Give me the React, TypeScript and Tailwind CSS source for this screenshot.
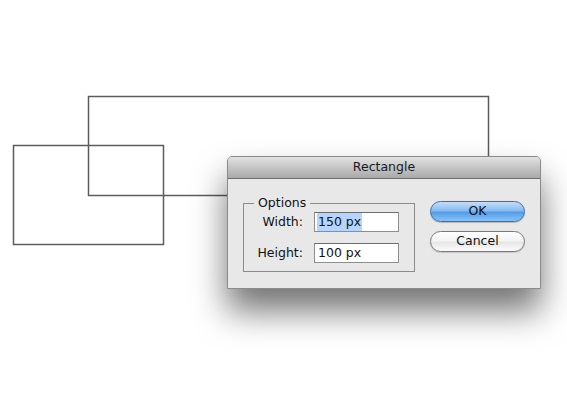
import React from "react";

export default function App() {
  const font = { fontFamily: '"DejaVu Sans", "Liberation Sans", sans-serif' };
  return (
    <div className="relative w-[567px] h-[404px] bg-white overflow-hidden" style={font}>
      <svg className="absolute left-0 top-0" width="567" height="404">
        <rect x="88.5" y="96.5" width="400" height="99" fill="none" stroke="#5c5c5c" strokeWidth="1.5" />
        <rect x="13.5" y="145.5" width="150" height="99" fill="none" stroke="#5c5c5c" strokeWidth="1.5" />
      </svg>

      <div className="absolute left-[227px] top-[156px] w-[314px] h-[133px] flex flex-col rounded-t-[5px] border border-[#8a8a8a] bg-[#e8e8e8] shadow-[0_22px_34px_rgba(0,0,0,0.55)]">
        <div className="h-[22px] flex items-center justify-center rounded-t-[4px] border-b border-[#6e6e6e] bg-gradient-to-b from-[#e2e2e2] to-[#a9a9a9] text-[12.5px] text-[#1a1a1a]">
          Rectangle
        </div>
        <div className="flex pl-[15px] pt-[22px]">
          <div className="relative mt-[2px] w-[172px] h-[69px] border border-[#8c8c8c]">
            <span className="absolute -top-[9px] left-[10px] bg-[#e8e8e8] px-[4px] text-[12.5px] leading-[16px] text-[#111]">
              Options
            </span>
            <div className="grid grid-cols-[59px_85px] gap-x-[11px] gap-y-[11px] pt-[8px] items-center">
              <div className="text-right text-[12.5px] text-[#111]">Width:</div>
              <div className="h-[20px] bg-white border border-[#8e8e8e] border-t-[#6e6e6e] flex items-center pl-[2px] text-[12.5px] text-[#111]">
                <span className="bg-[#b5d5ff] px-[1px]">150 px</span>
              </div>
              <div className="text-right text-[12.5px] text-[#111]">Height:</div>
              <div className="h-[20px] bg-white border border-[#8e8e8e] border-t-[#6e6e6e] flex items-center pl-[3px] text-[12.5px] text-[#111]">
                100 px
              </div>
            </div>
          </div>
          <div className="ml-[15px] flex flex-col gap-[9px]">
            <div className="w-[95px] h-[21px] rounded-full border border-[#3b6ea8] bg-[linear-gradient(to_bottom,#c4defa_0%,#87bbf0_45%,#559de8_55%,#86c3fa_100%)] flex items-center justify-center text-[12.5px] text-[#111] shadow-[0_1px_1px_rgba(0,0,0,0.2)]">
              OK
            </div>
            <div className="w-[95px] h-[21px] rounded-full border border-[#7a7a7a] bg-[linear-gradient(to_bottom,#ffffff_0%,#f4f4f4_45%,#e6e6e6_55%,#fbfbfb_100%)] flex items-center justify-center text-[12.5px] text-[#111] shadow-[0_1px_1px_rgba(0,0,0,0.15)]">
              Cancel
            </div>
          </div>
        </div>
      </div>
    </div>
  );
}
